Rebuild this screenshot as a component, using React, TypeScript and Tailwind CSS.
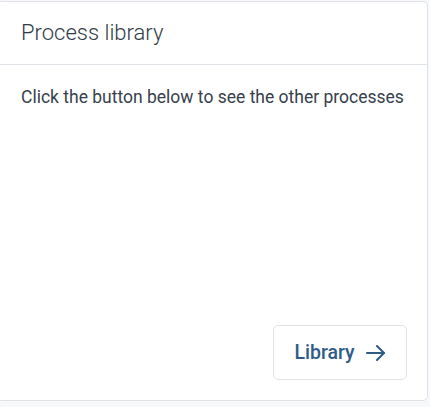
import React from "react";

export default function App() {
  return (
    <div className="w-[430px] h-[407px] bg-[#f7f8f9] overflow-hidden" style={{ fontFamily: "Roboto, 'Liberation Sans', sans-serif" }}>
      <div className="ml-[-3px] mt-[1px] w-[431px] h-[400px] bg-white border border-[#dfe3e8] rounded-[5px] flex flex-col">
        <div className="h-[63px] border-b border-[#dfe3e8] flex items-center pl-[23px]">
          <span className="text-[22px] font-light text-[#2f3b46] leading-none">Process library</span>
        </div>
        <div className="flex-1 flex flex-col px-[23px] pt-[22px] pb-[20px]">
          <p className="text-[17.5px] text-[#36414c] leading-[20px]">Click the button below to see the other processes</p>
          <div className="mt-auto flex justify-end">
            <button className="h-[55px] w-[134px] mr-[-3px] border border-[#dfe3e8] rounded-[5px] bg-white flex items-center justify-center gap-[11px] text-[#2e5c85]">
              <span className="text-[19.5px] font-medium leading-none">Library</span>
              <svg width="20" height="16" viewBox="0 0 20 16" fill="none" stroke="#2e5c85" strokeWidth="2" strokeLinecap="round" strokeLinejoin="round">
                <path d="M1 8h17" />
                <path d="M11 1l7 7-7 7" />
              </svg>
            </button>
          </div>
        </div>
      </div>
    </div>
  );
}
